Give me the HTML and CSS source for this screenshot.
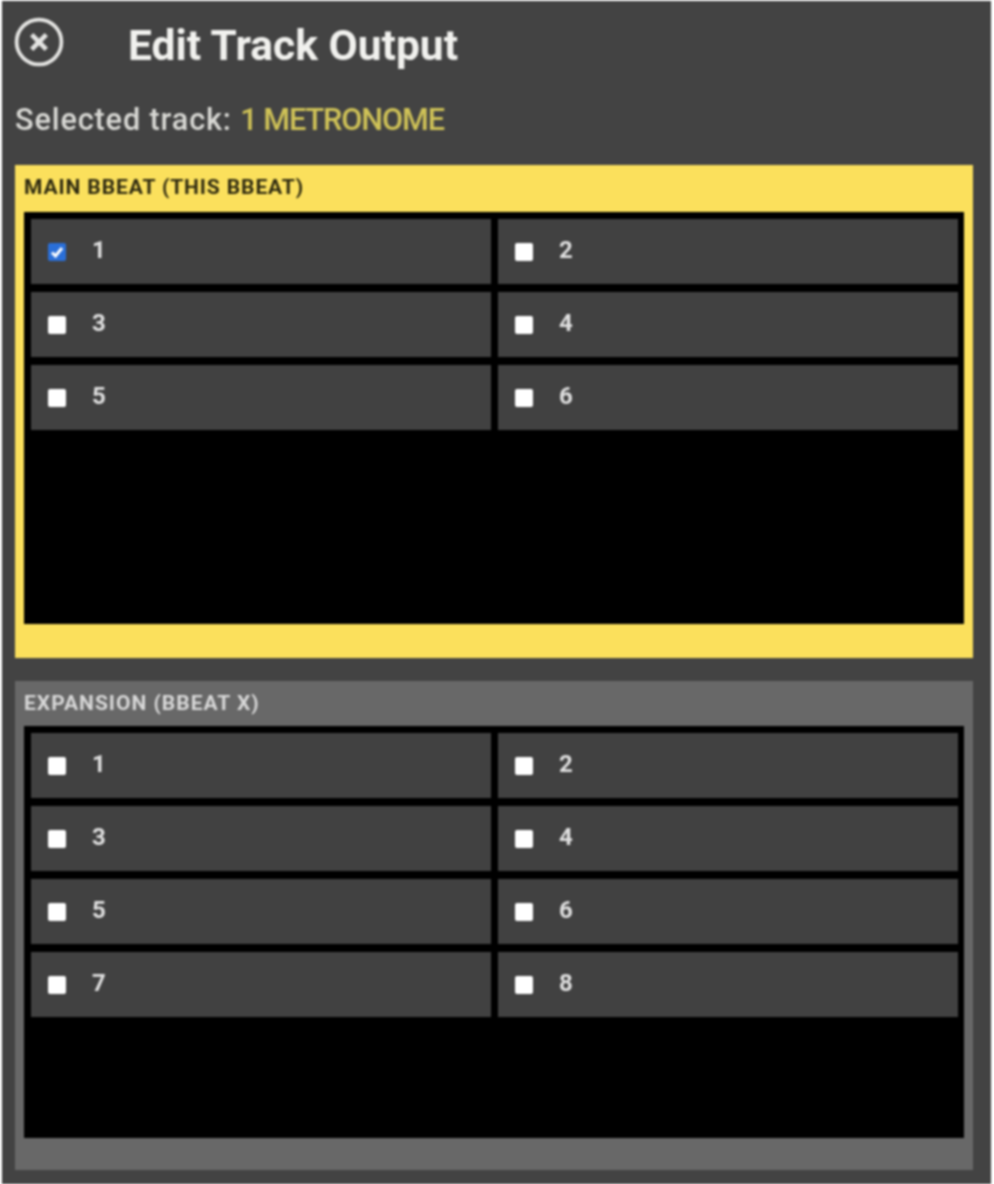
FILE: index.html
```html
<!DOCTYPE html>
<html>

	<head>
		<meta charset="UTF-8">
		<title>Edit Track Output</title>
		<link rel="stylesheet" href="styles.css">
	</head>

	<body>
		<div id="main">
			<div class="head">
				<svg class="close" viewBox="0 0 48 48" width="50" height="50">
					<circle cx="24" cy="24" r="21.5" fill="none" stroke="#e4e4e2" stroke-width="3.6"/>
					<path d="M17 17L31 31M31 17L17 31" fill="none" stroke="#e4e4e2" stroke-width="4.5"/>
				</svg>
				<h1>Edit Track Output</h1>
			</div>
			<p class="selected">Selected track: <span>1 METRONOME</span></p>

			<div class="panel panel-main">
				<div class="panel-title">MAIN BBEAT (THIS BBEAT)</div>
				<div class="grid">
					<div class="cell">
						<span class="box box-on">
							<svg viewBox="0 0 18 18" width="18" height="18"><path d="M4 9.5L7.5 13L14 5" fill="none" stroke="#fff" stroke-width="3"/></svg>
						</span>1
					</div>
					<div class="cell"><span class="box"></span>2</div>
					<div class="cell"><span class="box"></span>3</div>
					<div class="cell"><span class="box"></span>4</div>
					<div class="cell"><span class="box"></span>5</div>
					<div class="cell"><span class="box"></span>6</div>
				</div>
			</div>

			<div class="panel panel-exp">
				<div class="panel-title">EXPANSION (BBEAT X)</div>
				<div class="grid">
					<div class="cell"><span class="box"></span>1</div>
					<div class="cell"><span class="box"></span>2</div>
					<div class="cell"><span class="box"></span>3</div>
					<div class="cell"><span class="box"></span>4</div>
					<div class="cell"><span class="box"></span>5</div>
					<div class="cell"><span class="box"></span>6</div>
					<div class="cell"><span class="box"></span>7</div>
					<div class="cell"><span class="box"></span>8</div>
				</div>
			</div>
		</div>
	</body>

</html>
```

FILE: styles.css
```css
html {
	background-color: #fff;
}

body {
	margin: 0;
	padding: 1px 3px 0 2px;
	font-family: "Roboto", "Liberation Sans", sans-serif;
	color: #e4e4e2;
	overflow: hidden;
}

#main {
	height: 1183px;
	box-sizing: border-box;
	padding: 0 18px 0 13px;
	background-color: #434343;
	overflow: hidden;
	filter: blur(0.8px);
}

.head {
	display: flex;
	align-items: center;
	height: 85px;
	padding-top: 3px;
	box-sizing: border-box;
}

.close {
	margin-left: -1px;
	margin-right: 64px;
	margin-top: -7px;
}

.head>h1 {
	margin: 0;
	font-size: 42.5px;
	font-weight: 700;
	color: #f1f1ee;
	white-space: nowrap;
}

.selected {
	margin: 0;
	height: 79px;
	box-sizing: border-box;
	padding-top: 16px;
	font-size: 30.7px;
	font-weight: 500;
	letter-spacing: 0.85px;
	color: #d8d8d4;
	white-space: nowrap;
}

.selected>span {
	color: #cfc257;
	letter-spacing: -1.1px;
}

.panel {
	padding: 0 9px;
	box-sizing: border-box;
}

.panel-main {
	height: 493px;
	margin-bottom: 23px;
	background-color: #fbe05c;
	color: #2e2a10;
}

.panel-exp {
	height: 489px;
	background-color: #686868;
	color: #d8d8d8;
}

.panel-title {
	height: 47px;
	line-height: 45px;
	font-size: 21px;
	font-weight: 700;
	letter-spacing: 0.9px;
	white-space: nowrap;
}

.panel-exp>.panel-title {
	height: 45px;
	letter-spacing: 1px;
}

.grid {
	height: 412px;
	box-sizing: border-box;
	padding: 7px;
	background-color: #000;
	display: grid;
	grid-template-columns: 460px 460px;
	grid-auto-rows: 65px;
	column-gap: 7px;
	row-gap: 8px;
}

.cell {
	display: flex;
	align-items: center;
	padding-left: 17px;
	padding-bottom: 3px;
	box-sizing: border-box;
	background-color: #414141;
	color: #e0e0e0;
	font-size: 24px;
	font-weight: 700;
}

.box {
	width: 18px;
	height: 18px;
	margin-right: 26px;
	margin-top: 3px;
	background-color: #fff;
	border-radius: 2px;
	display: block;
}

.box-on {
	background-color: #2a6fd8;
}

.box-on>svg {
	display: block;
}
```
